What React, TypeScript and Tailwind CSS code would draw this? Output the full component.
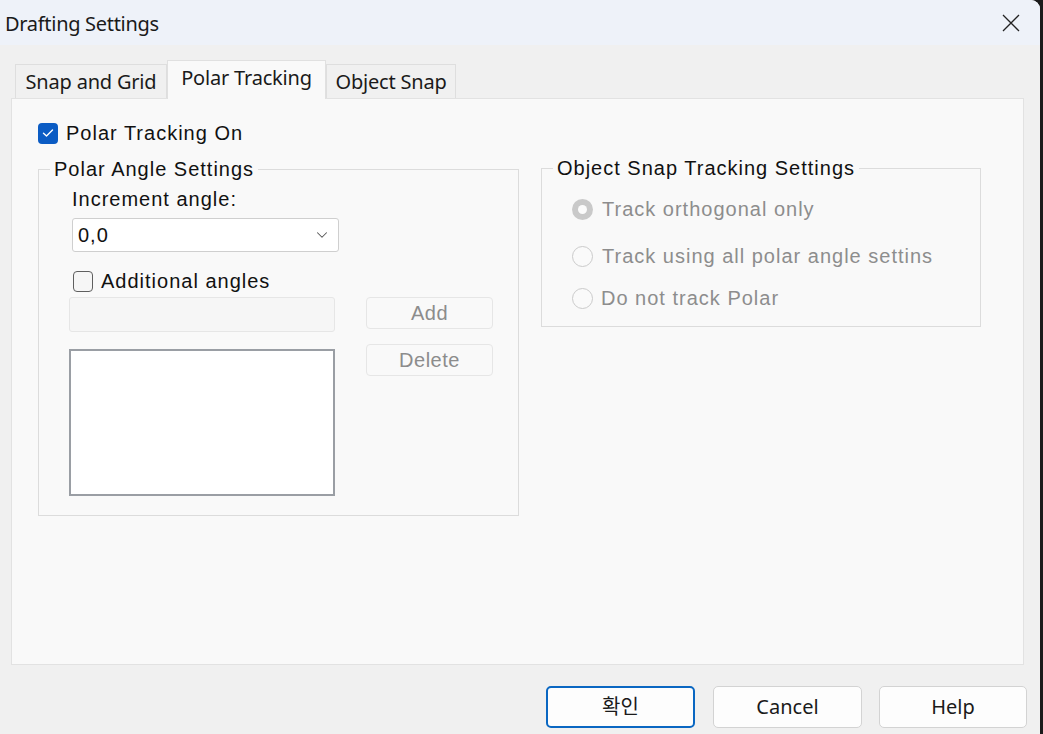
import { ChevronDown } from "lucide-react";

const ui = "font-['Noto_Sans','Noto_Sans_CJK_KR',sans-serif]";
const body = "font-['Liberation_Sans','Noto_Sans_CJK_KR',sans-serif]";

function Check({ checked }: { checked: boolean }) {
  return checked ? (
    <span className="w-[20px] h-[21px] rounded-[4px] bg-[#0b5cc4] flex items-center justify-center">
      <svg width="12" height="10" viewBox="0 0 12 10" fill="none">
        <path d="M1.5 5.2 L4.5 8 L10.5 2" stroke="white" strokeWidth="1.4" strokeLinecap="round" strokeLinejoin="round" />
      </svg>
    </span>
  ) : (
    <span className="w-[20px] h-[21px] rounded-[4px] border-[1.5px] border-[#5f5f5f] bg-[#f6f6f6]" />
  );
}

function Radio({ selected }: { selected?: boolean }) {
  return selected ? (
    <span className="w-[21px] h-[21px] rounded-full bg-[#c9c9c9] flex items-center justify-center">
      <span className="w-[9px] h-[9px] rounded-full bg-[#fbfbfb]" />
    </span>
  ) : (
    <span className="w-[21px] h-[21px] rounded-full border border-[#cbcbcb] bg-[#fafafa]" />
  );
}

export default function App() {
  return (
    <div className="w-[1043px] h-[734px] bg-[#1b1b1b] overflow-hidden">
      <div className={`w-[1040px] h-[734px] bg-[#f0f0f0] rounded-tr-[9px] overflow-hidden flex flex-col ${ui}`}>
        {/* title bar */}
        <div className="h-[45px] bg-[#eef2f9] flex items-center justify-between pl-[5px] pr-[20px] shrink-0">
          <span className="text-[20px] text-[#1a1a1a] tracking-[-0.3px] mt-[2px]">Drafting Settings</span>
          <svg width="18" height="18" viewBox="0 0 18 18">
            <path d="M1 1 L17 17 M17 1 L1 17" stroke="#222" strokeWidth="1.3" />
          </svg>
        </div>

        <div className="flex-1 flex flex-col pt-[15px] pl-[11px] pr-[16px]">
          {/* tabs */}
          <div className="flex items-end ml-[4px] h-[38px] relative z-10 text-[20px] tracking-[-0.2px] text-[#1a1a1a]">
            <div className="h-[34px] w-[152px] bg-[#f0f0f0] border border-b-0 border-[#dedede] flex items-center justify-center">
              Snap and Grid
            </div>
            <div className="h-[39px] w-[159px] -mb-px bg-[#f9f9f9] border border-b-0 border-[#e0e0e0] flex items-start justify-center pt-[2px]">
              Polar Tracking
            </div>
            <div className="h-[34px] w-[130px] bg-[#f0f0f0] border border-b-0 border-[#dedede] flex items-center justify-center">
              Object Snap
            </div>
          </div>

          {/* panel */}
          <div className={`h-[567px] bg-[#f9f9f9] border border-[#e2e2e2] pl-[26px] pt-[23px] text-[20px] tracking-[1px] text-[#111] ${body}`}>
            <label className="flex items-center gap-[8px] h-[22px]">
              <Check checked />
              <span>Polar Tracking On</span>
            </label>

            <div className="flex items-start gap-[22px] mt-[13px]">
              <fieldset className="w-[481px] h-[359px] border border-[#dcdcdc]">
                <legend className="ml-[11px] px-[4px] leading-[24px]">Polar Angle Settings</legend>
                <div className="pl-[33px] flex flex-col">
                  <span className="mt-[6px] leading-[24px]">Increment angle:</span>
                  <div className="mt-[7px] w-[267px] h-[34px] bg-white border border-[#cfcfcf] rounded-[3px] flex items-center justify-between pl-[5px] pr-[7px]">
                    <span>0,0</span>
                    <ChevronDown size={18} strokeWidth={1.4} className="text-[#555]" />
                  </div>
                  <label className="mt-[17px] flex items-center gap-[8px] h-[24px] ml-[1px]">
                    <Check checked={false} />
                    <span>Additional angles</span>
                  </label>
                  <div className="flex gap-[31px] -ml-[3px] mt-[4px]">
                    <div className="flex flex-col gap-[17px]">
                      <div className="w-[266px] h-[35px] bg-[#f6f6f6] border border-[#e6e6e6] rounded-[3px]" />
                      <div className="w-[266px] h-[147px] bg-white border-2 border-[#9a9ea4]" />
                    </div>
                    <div className="flex flex-col gap-[15px] text-[#8c8c8c] tracking-[0.5px]">
                      <div className="w-[127px] h-[32px] border border-[#e6e6e6] rounded-[4px] flex items-center justify-center">Add</div>
                      <div className="w-[127px] h-[32px] border border-[#e6e6e6] rounded-[4px] flex items-center justify-center">Delete</div>
                    </div>
                  </div>
                </div>
              </fieldset>

              <fieldset className="w-[440px] h-[171px] border border-[#dcdcdc] -mt-[1px]">
                <legend className="ml-[11px] px-[4px] leading-[24px]">Object Snap Tracking Settings</legend>
                <div className="pl-[30px] flex flex-col text-[#8d8d8d]">
                  <div className="mt-[17px] flex items-center gap-[9px] h-[24px]">
                    <Radio selected />
                    <span>Track orthogonal only</span>
                  </div>
                  <div className="mt-[23px] flex items-center gap-[9px] h-[24px]">
                    <Radio />
                    <span>Track using all polar angle settins</span>
                  </div>
                  <div className="mt-[18px] flex items-center gap-[8px] h-[24px]">
                    <Radio />
                    <span>Do not track Polar</span>
                  </div>
                </div>
              </fieldset>
            </div>
          </div>

          {/* buttons */}
          <div className="flex justify-end mt-[21px] text-[20px] text-[#1a1a1a]">
            <button className="w-[149px] h-[42px] bg-[#fdfdfd] border-2 border-[#0a67c2] rounded-[5px]">확인</button>
            <button className="ml-[18px] w-[149px] h-[42px] bg-[#fdfdfd] border border-[#d3d3d3] rounded-[5px]">Cancel</button>
            <button className="ml-[17px] w-[148px] h-[42px] bg-[#fdfdfd] border border-[#d3d3d3] rounded-[5px] -mr-[3px]">Help</button>
          </div>
        </div>
      </div>
    </div>
  );
}
